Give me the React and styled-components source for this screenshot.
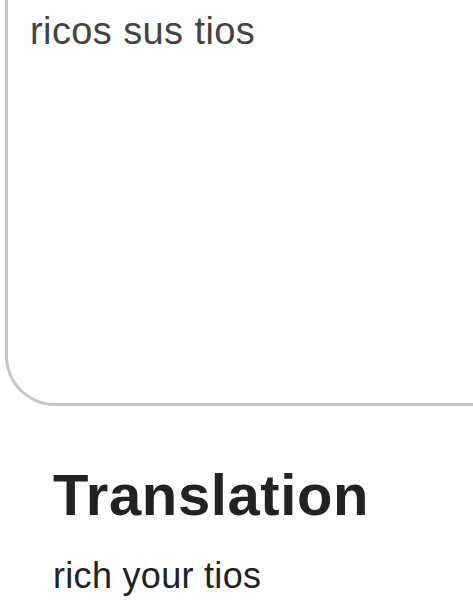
import styled, { createGlobalStyle } from 'styled-components';
import React from 'react';

const Global = createGlobalStyle`
  html, body {
    margin: 0;
    padding: 0;
    background: #fff;
    overflow: hidden;
    font-family: "Liberation Sans", Arial, sans-serif;
  }
`;

const InputBox = styled.div`
  box-sizing: border-box;
  height: 406px;
  margin-left: 5px;
  padding: 9px 0 0 22px;
  border: 3px solid #c6c6c6;
  border-top: none;
  border-right: none;
  border-bottom-left-radius: 50px;
`;

const SourceText = styled.p`
  margin: 0;
  font-size: 38px;
  line-height: 1.2;
  letter-spacing: 0.4px;
  color: #444;
`;

const Result = styled.section`
  padding-left: 53px;
  margin-top: 54px;
`;

const Titulo = styled.h1`
  margin: 0;
  font-size: 58px;
  line-height: 1.2;
  font-weight: 700;
  letter-spacing: 0.6px;
  color: #222;
`;

const Traducao = styled.p`
  margin: 24px 0 0;
  font-size: 36px;
  line-height: 1.2;
  letter-spacing: 0.3px;
  color: #222;
`;

function App() {
  return (
    <div>
      <Global />
      <InputBox>
        <SourceText>ricos sus tios</SourceText>
      </InputBox>
      <Result>
        <Titulo>Translation</Titulo>
        <Traducao>rich your tios</Traducao>
      </Result>
    </div>
  );
}

export default App;
